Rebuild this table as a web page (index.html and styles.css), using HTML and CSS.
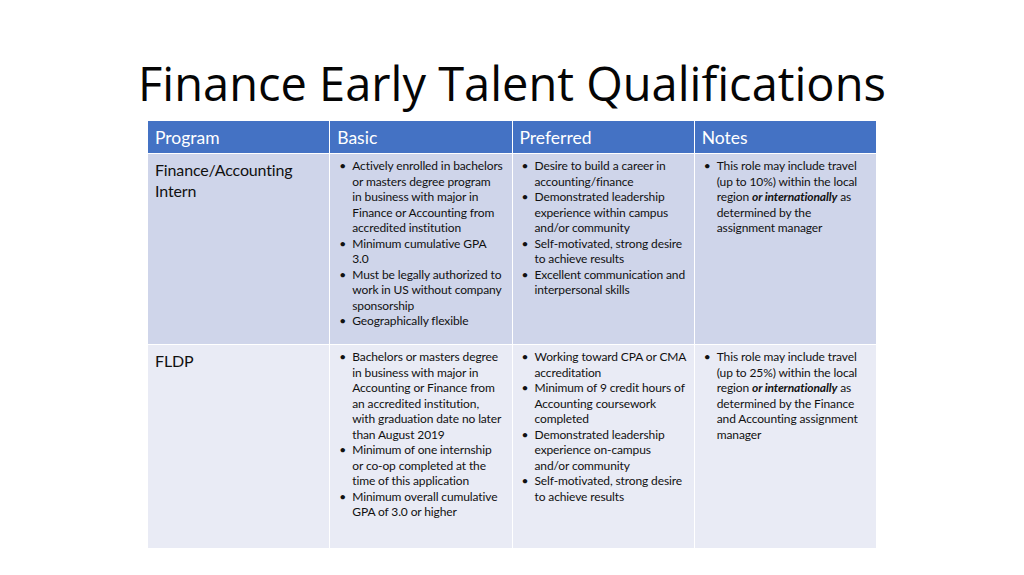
FILE: index.html
```html
<!DOCTYPE html>
<html lang="en">
<head>
<meta charset="utf-8">
<title>Finance Early Talent Qualifications</title>
<link rel="stylesheet" href="styles.css">
</head>
<body>
<main class="slide">
  <h1 class="title">Finance Early Talent Qualifications</h1>
  <table class="quals">
    <thead>
      <tr>
        <th>Program</th>
        <th>Basic</th>
        <th>Preferred</th>
        <th>Notes</th>
      </tr>
    </thead>
    <tbody>
      <tr class="row-odd">
        <td class="prog">Finance/Accounting<br>Intern</td>
        <td>
          <ul>
            <li>Actively enrolled in bachelors<br>or masters degree program<br>in business with major in<br>Finance or Accounting from<br>accredited institution</li>
            <li>Minimum cumulative GPA<br>3.0</li>
            <li>Must be legally authorized to<br>work in US without company<br>sponsorship</li>
            <li>Geographically flexible</li>
          </ul>
        </td>
        <td>
          <ul>
            <li>Desire to build a career in<br>accounting/finance</li>
            <li>Demonstrated leadership<br>experience within campus<br>and/or community</li>
            <li>Self-motivated, strong desire<br>to achieve results</li>
            <li>Excellent communication and<br>interpersonal skills</li>
          </ul>
        </td>
        <td>
          <ul>
            <li>This role may include travel<br>(up to 10%) within the local<br>region <b class="em">or internationally</b> as<br>determined by the<br>assignment manager</li>
          </ul>
        </td>
      </tr>
      <tr class="row-even">
        <td class="prog">FLDP</td>
        <td>
          <ul>
            <li>Bachelors or masters degree<br>in business with major in<br>Accounting or Finance from<br>an accredited institution,<br>with graduation date no later<br>than August 2019</li>
            <li>Minimum of one internship<br>or co-op completed at the<br>time of this application</li>
            <li>Minimum overall cumulative<br>GPA of 3.0 or higher</li>
          </ul>
        </td>
        <td>
          <ul>
            <li>Working toward CPA or CMA<br>accreditation</li>
            <li>Minimum of 9 credit hours of<br>Accounting coursework<br>completed</li>
            <li>Demonstrated leadership<br>experience on-campus<br>and/or community</li>
            <li>Self-motivated, strong desire<br>to achieve results</li>
          </ul>
        </td>
        <td>
          <ul>
            <li>This role may include travel<br>(up to 25%) within the local<br>region <b class="em">or internationally</b> as<br>determined by the Finance<br>and Accounting assignment<br>manager</li>
          </ul>
        </td>
      </tr>
    </tbody>
  </table>
</main>
</body>
</html>
```

FILE: styles.css
```css
html, body {
  margin: 0;
  padding: 0;
  background: #ffffff;
}

.slide {
  width: 1024px;
  height: 575px;
  display: flex;
  flex-direction: column;
  align-items: center;
  overflow: hidden;
}

.title {
  margin: 52px 0 0 0;
  font-family: "Open Sans", "Noto Sans", sans-serif;
  font-weight: 400;
  font-size: 47px;
  line-height: 62px;
  color: #050505;
  letter-spacing: 0;
}

.quals {
  margin-top: 6px;
  border-collapse: collapse;
  table-layout: fixed;
  width: 730px;
  font-family: Lato, "Liberation Sans", sans-serif;
  color: #111111;
}

.quals th,
.quals td {
  border: 1px solid #ffffff;
  width: 182px;
  vertical-align: top;
  text-align: left;
}

.quals th {
  background: #4472c4;
  color: #ffffff;
  font-weight: 400;
  font-size: 17.5px;
  height: 33px;
  padding: 0 7px;
  vertical-align: middle;
  box-sizing: border-box;
}

.row-odd td {
  background: #cfd5ea;
  height: 191px;
}

.row-even td {
  background: #e9ebf5;
  height: 204px;
}

.quals td {
  padding: 4px 2px 0 6px;
  box-sizing: border-box;
  font-size: 12px;
  line-height: 15.5px;
  letter-spacing: -0.12px;
  white-space: nowrap;
}

.quals td.prog {
  font-size: 16px;
  line-height: 21px;
  padding: 5px 7px 0 7px;
  letter-spacing: -0.15px;
}

.quals ul {
  margin: 0;
  padding: 0 0 0 16px;
  list-style: none;
}

.quals li {
  position: relative;
}

.quals li::before {
  content: "\2022";
  position: absolute;
  left: -13px;
  top: 0;
}

.em {
  font-weight: 700;
  font-style: italic;
}
```
